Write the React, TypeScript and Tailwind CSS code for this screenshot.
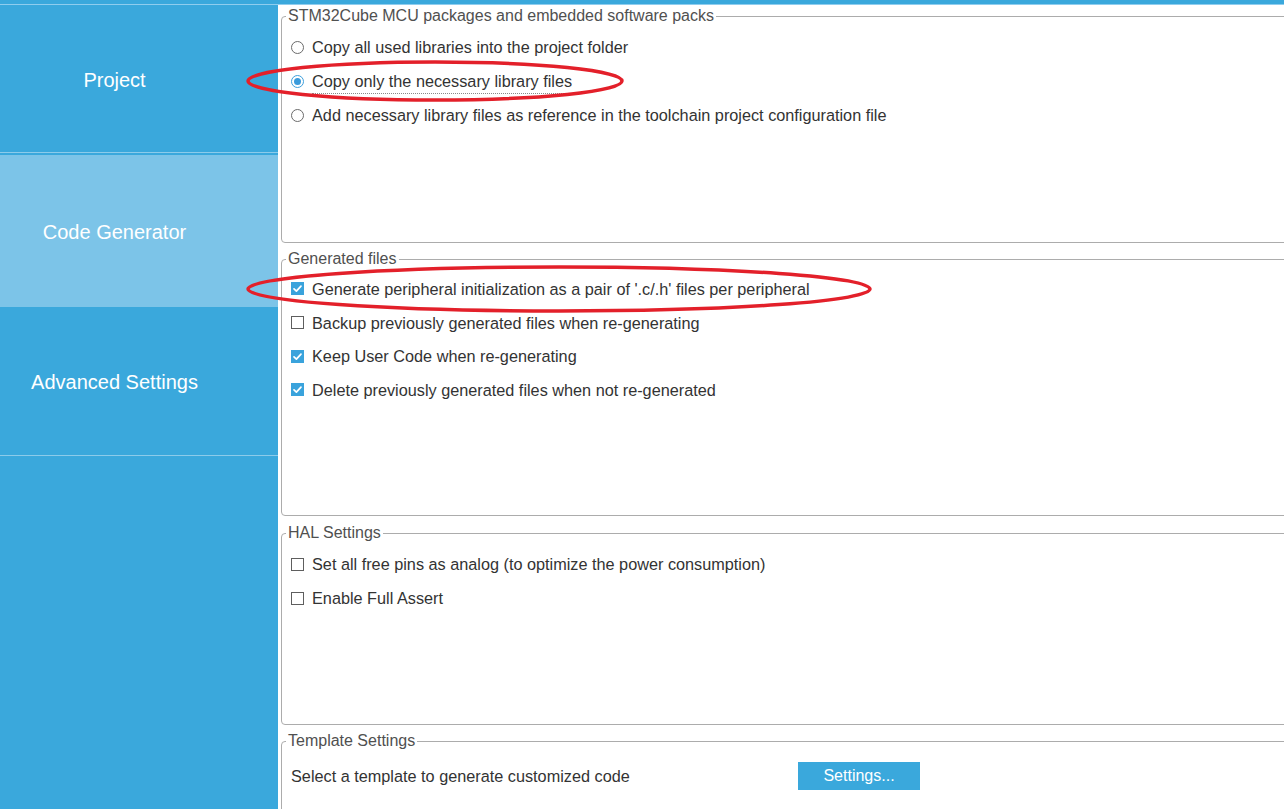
import React from "react";

const font = { fontFamily: '"Liberation Sans", Arial, sans-serif' };

function Radio({ checked }: { checked?: boolean }) {
  return checked ? (
    <span className="flex h-[13px] w-[13px] shrink-0 items-center justify-center rounded-full border border-[#3d9fdc] bg-white">
      <span className="h-[7px] w-[7px] rounded-full bg-[#3a9bdb]" />
    </span>
  ) : (
    <span className="h-[13px] w-[13px] shrink-0 rounded-full border border-[#6b6b6b] bg-white" />
  );
}

function Check({ checked }: { checked?: boolean }) {
  return checked ? (
    <span className="flex h-[13px] w-[13px] shrink-0 items-center justify-center bg-[#3aa3dc]">
      <svg width="13" height="13" viewBox="0 0 13 13">
        <polyline points="3,6.8 5.4,9.2 10,4.2" fill="none" stroke="white" strokeWidth="1.7" strokeLinecap="round" strokeLinejoin="round" />
      </svg>
    </span>
  ) : (
    <span className="h-[13px] w-[13px] shrink-0 border border-[#5e5e5e] bg-white" />
  );
}

function Row({ children, h }: { children: React.ReactNode; h: string }) {
  return <div className={`flex items-center gap-[8px] pl-[9px] ${h}`}>{children}</div>;
}

function Legend({ children }: { children: React.ReactNode }) {
  return (
    <legend className="ml-[4px] pl-[2px] pr-[2px] text-[16px] leading-[18px] text-[#505050]">{children}</legend>
  );
}

const label = "text-[16.25px] leading-[18px] text-[#333333] whitespace-nowrap";

export default function App() {
  return (
    <div className="relative flex h-[809px] w-[1284px] flex-col overflow-hidden bg-white" style={font}>
      <div className="h-[4px] w-full shrink-0 bg-[#3aa8dc]" />
      <div className="h-[1px] w-full shrink-0 bg-[#8fcdee]" />
      <div className="flex min-h-0 flex-1">
        {/* sidebar */}
        <div className="flex w-[278px] shrink-0 flex-col bg-[#3aa8dc]">
          <div className="flex h-[147px] items-center justify-center pr-[49px] pt-[2px] text-[20px] text-white">Project</div>
          <div className="h-[1px] bg-[#8ccbea]" />
          <div className="h-[2px]" />
          <div className="flex h-[152px] items-center justify-center bg-[#7cc4e8] pr-[49px] pt-[1px] text-[20px] text-white">
            Code Generator
          </div>
          <div className="flex h-[148px] items-center justify-center pr-[49px] pt-[2px] text-[20px] text-white">
            Advanced Settings
          </div>
          <div className="h-[1px] bg-[#8ccbea]" />
        </div>

        {/* content */}
        <div className="flex min-w-0 flex-1 flex-col overflow-hidden pl-[3px] pt-[2px]">
          <fieldset className="h-[236px] w-[1020px] shrink-0 rounded-[4px] border border-[#acacac]">
            <Legend>STM32Cube MCU packages and embedded software packs</Legend>
            <div className="pt-[5px]">
              <Row h="h-[34px]">
                <Radio />
                <span className={label}>Copy all used libraries into the project folder</span>
              </Row>
              <Row h="h-[34px]">
                <Radio checked />
                <span className={`${label} border-b border-dotted border-[#8a8a8a] pb-[3px] pt-[4px]`}>
                  Copy only the necessary library files
                </span>
              </Row>
              <Row h="h-[34px]">
                <Radio />
                <span className={label}>Add necessary library files as reference in the toolchain project configuration file</span>
              </Row>
            </div>
          </fieldset>

          <fieldset className="mt-[7px] h-[266px] w-[1020px] shrink-0 rounded-[4px] border border-[#acacac]">
            <Legend>Generated files</Legend>
            <div className="pt-[4px]">
              <Row h="h-[33.7px]">
                <Check checked />
                <span className={label}>Generate peripheral initialization as a pair of '.c/.h' files per peripheral</span>
              </Row>
              <Row h="h-[33.7px]">
                <Check />
                <span className={label}>Backup previously generated files when re-generating</span>
              </Row>
              <Row h="h-[33.7px]">
                <Check checked />
                <span className={label}>Keep User Code when re-generating</span>
              </Row>
              <Row h="h-[33.7px]">
                <Check checked />
                <span className={label}>Delete previously generated files when not re-generated</span>
              </Row>
            </div>
          </fieldset>

          <fieldset className="mt-[8px] h-[201px] w-[1020px] shrink-0 rounded-[4px] border border-[#acacac]">
            <Legend>HAL Settings</Legend>
            <div className="pt-[5px]">
              <Row h="h-[34px]">
                <Check />
                <span className={label}>Set all free pins as analog (to optimize the power consumption)</span>
              </Row>
              <Row h="h-[34px]">
                <Check />
                <span className={label}>Enable Full Assert</span>
              </Row>
            </div>
          </fieldset>

          <fieldset className="mt-[7px] h-[120px] w-[1020px] shrink-0 rounded-[4px] border border-[#acacac]">
            <Legend>Template Settings</Legend>
            <div className="pt-[11px]">
              <div className="flex h-[30px] items-center pl-[9px]">
                <span className={`${label} w-[507px]`}>Select a template to generate customized code</span>
                <button className="flex h-[28px] w-[122px] items-center justify-center bg-[#3aa8dc] text-[16px] text-white">
                  Settings...
                </button>
              </div>
            </div>
          </fieldset>
        </div>
      </div>

      {/* red annotation ellipses */}
      <svg className="pointer-events-none absolute left-0 top-0" width="1284" height="809" viewBox="0 0 1284 809">
        <ellipse cx="435" cy="81" rx="187" ry="19" fill="none" stroke="#e3202a" strokeWidth="3.5" />
        <ellipse cx="559" cy="289" rx="311" ry="22" fill="none" stroke="#e3202a" strokeWidth="3.5" />
      </svg>
    </div>
  );
}
